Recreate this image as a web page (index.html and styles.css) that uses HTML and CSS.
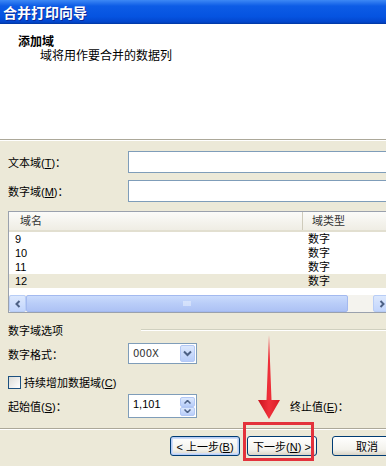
FILE: index.html
```html
<!DOCTYPE html>
<html lang="zh-CN">
<head>
    <meta charset="UTF-8">
    <title>合并打印向导</title>
    <link rel="stylesheet" href="styles.css">
</head>
<body>
    <div class="dialog">
        <div class="titlebar">合并打印向导</div>
        <div class="header">
            <div class="header-title">添加域</div>
            <div class="header-desc">域将用作要合并的数据列</div>
        </div>

        <div class="content">
            <div class="field-row">
                <label>文本域(<u>T</u>)：</label>
                <div class="textbox"></div>
            </div>
            <div class="field-row second">
                <label>数字域(<u>M</u>)：</label>
                <div class="textbox"></div>
            </div>

            <div class="listview">
                <div class="list-main">
                    <div class="list-head">
                        <div class="col-name">域名</div>
                        <div class="col-type">域类型</div>
                    </div>
                    <div class="list-row"><span class="col-name">9</span><span class="col-type">数字</span></div>
                    <div class="list-row"><span class="col-name">10</span><span class="col-type">数字</span></div>
                    <div class="list-row"><span class="col-name">11</span><span class="col-type">数字</span></div>
                    <div class="list-row selected"><span class="col-name">12</span><span class="col-type">数字</span></div>
                    <div class="list-fill"></div>
                    <div class="hscroll">
                        <div class="sb-btn">
                            <svg width="8" height="8" viewBox="0 0 8 8"><path d="M5.5 1 L2.5 4 L5.5 7" fill="none" stroke="#4d6185" stroke-width="2"/></svg>
                        </div>
                        <div class="sb-thumb h">
                            <svg width="8" height="7" viewBox="0 0 8 7"><path d="M1 1v5M3 1v5M5 1v5M7 1v5" stroke="#eef4fe" stroke-width="1"/></svg>
                        </div>
                        <div class="sb-track"></div>
                        <div class="sb-btn">
                            <svg width="8" height="8" viewBox="0 0 8 8"><path d="M2.5 1 L5.5 4 L2.5 7" fill="none" stroke="#4d6185" stroke-width="2"/></svg>
                        </div>
                    </div>
                </div>
                <div class="vscroll">
                    <div class="sb-btn"></div>
                    <div class="sb-track v"></div>
                    <div class="sb-thumb v"></div>
                    <div class="sb-btn"></div>
                </div>
            </div>

            <div class="group-title">
                <span>数字域选项</span>
                <div class="group-line"></div>
            </div>

            <div class="field-row format-row">
                <label>数字格式：</label>
                <div class="combo">
                    <span class="combo-text">000X</span>
                    <span class="combo-btn">
                        <svg width="9" height="7" viewBox="0 0 9 7"><path d="M1 1.5 L4.5 5 L8 1.5" fill="none" stroke="#4d6185" stroke-width="2"/></svg>
                    </span>
                </div>
            </div>

            <div class="check-row">
                <span class="checkbox"></span>
                <span>持续增加数据域(<u>C</u>)</span>
            </div>

            <div class="field-row spin-row">
                <label>起始值(<u>S</u>)：</label>
                <div class="spin">
                    <span class="spin-text">1,101</span>
                    <span class="spin-btns">
                        <span class="spin-btn">
                            <svg width="7" height="4" viewBox="0 0 7 4"><path d="M0.5 3.5 L3.5 0.5 L6.5 3.5" fill="none" stroke="#4d6185" stroke-width="1.5"/></svg>
                        </span>
                        <span class="spin-btn">
                            <svg width="7" height="4" viewBox="0 0 7 4"><path d="M0.5 0.5 L3.5 3.5 L6.5 0.5" fill="none" stroke="#4d6185" stroke-width="1.5"/></svg>
                        </span>
                    </span>
                </div>
                <label class="end-label">终止值(<u>E</u>)：</label>
            </div>
        </div>

        <div class="footer">
            <button class="btn default">&lt; 上一步(<u>B</u>)</button>
            <button class="btn">下一步(<u>N</u>) &gt;</button>
            <button class="btn cancel">取消</button>
        </div>

        <!-- 标注 -->
        <div class="highlight"></div>
        <svg class="arrow" width="26" height="90" viewBox="0 0 26 90">
            <defs>
                <linearGradient id="arrowFill" x1="0" x2="1" y1="0" y2="0">
                    <stop offset="0" stop-color="#c8141e"/>
                    <stop offset="0.5" stop-color="#f0303a"/>
                    <stop offset="1" stop-color="#d81c26"/>
                </linearGradient>
            </defs>
            <path d="M13 2 L15.5 67 L24 67 L13 86 L2 67 L10.5 67 Z" fill="url(#arrowFill)"/>
        </svg>
    </div>
</body>
</html>
```

FILE: styles.css
```css
html, body {
    margin: 0;
    padding: 0;
    overflow: hidden;
}
body {
    width: 386px;
    height: 466px;
    background-color: #ece9d8;
    font-family: "Liberation Sans", "Noto Sans CJK SC", sans-serif;
    font-size: 11px;
    color: #000;
}
u {
    text-decoration: underline;
}
.dialog {
    position: relative;
    width: 408px;
    height: 466px;
}
.titlebar {
    height: 24px;
    line-height: 24px;
    padding-left: 3px;
    color: #fff;
    font-family: "Noto Sans CJK SC", sans-serif;
    font-weight: bold;
    font-size: 14px;
    text-shadow: 1px 1px 0 #0a2a9a;
    background: linear-gradient(#3d88f5, #0d5ce6 25%, #0553e0 70%, #0346cc 92%, #00369e);
}
.header {
    box-sizing: border-box;
    height: 116px;
    padding: 10px 0 0 18px;
    background-color: #fff;
    border-bottom: 1px solid #aca899;
}
.header-title {
    font-family: "Noto Sans CJK SC", sans-serif;
    font-weight: bold;
    font-size: 12px;
    line-height: 14px;
}
.header-desc {
    font-family: "Noto Sans CJK SC", sans-serif;
    font-size: 12px;
    line-height: 14px;
    margin: 0 0 0 22px;
}
.content {
    border-top: 1px solid #fff;
    padding: 10px 0 0 8px;
}
.field-row {
    display: grid;
    grid-template-columns: 120px 1fr;
    align-items: center;
    height: 22px;
}
.field-row.second {
    margin-top: 7px;
}
.textbox {
    box-sizing: border-box;
    height: 22px;
    background: #fff;
    border: 1px solid #7f9db9;
}

/* 列表 */
.listview {
    display: flex;
    box-sizing: border-box;
    margin-top: 9px;
    height: 102px;
    background: #fff;
    border: 1px solid #9aa1ad;
}
.list-main {
    flex: 1;
    display: flex;
    flex-direction: column;
    font-size: 11px;
}
.list-head {
    display: flex;
    box-sizing: border-box;
    height: 20px;
    line-height: 19px;
    color: #333;
    background: linear-gradient(#fbfbf9, #efede4);
    border-bottom: 2px solid #e2dfd0;
}
.list-head .col-name {
    width: 282px;
    padding-left: 11px;
    border-right: 1px solid #cfcbbb;
}
.list-head .col-type {
    padding-left: 9px;
}
.list-row {
    display: flex;
    height: 14px;
    line-height: 14px;
}
.list-row.selected {
    background: #ece9d8;
}
.list-row .col-name {
    width: 293px;
    padding-left: 6px;
}
.list-fill {
    flex: 1;
}
.hscroll {
    display: flex;
    height: 17px;
    background: #f4f3ee;
}
.sb-btn {
    box-sizing: border-box;
    width: 17px;
    height: 17px;
    display: flex;
    align-items: center;
    justify-content: center;
    background: linear-gradient(#dce8fd, #c2d5fc);
    border: 1px solid #b8cdf6;
    border-radius: 2px;
}
.sb-thumb.h {
    width: 322px;
    display: flex;
    align-items: center;
    justify-content: center;
    box-sizing: border-box;
    background: linear-gradient(#cadbfc, #b9cdf8 50%, #adc2f4);
    border: 1px solid #a3b9ef;
    border-radius: 2px;
}
.sb-track {
    flex: 1;
}
.vscroll {
    width: 17px;
    display: flex;
    flex-direction: column;
    background: #f4f3ee;
}
.sb-track.v {
    flex: 1;
}
.sb-thumb.v {
    height: 28px;
    background: linear-gradient(90deg, #cadbfc, #adc2f4);
    border: 1px solid #a3b9ef;
    border-radius: 2px;
}

/* 数字域选项 */
.group-title {
    display: flex;
    align-items: center;
    margin-top: 9px;
    height: 16px;
    font-family: "Noto Sans CJK SC", sans-serif;
}
.group-line {
    flex: 1;
    margin-left: 78px;
    border-top: 1px solid #d0d0bf;
    border-bottom: 1px solid #fff;
}
.format-row {
    margin-top: 5px;
    height: 21px;
}
.combo {
    box-sizing: border-box;
    width: 69px;
    height: 21px;
    display: flex;
    align-items: center;
    justify-content: space-between;
    background: #fff;
    border: 1px solid #7f9db9;
    padding: 1px;
}
.combo-text {
    padding-left: 3px;
    font-family: "DejaVu Sans", sans-serif;
    font-size: 10px;
    color: #333;
}
.combo-btn {
    box-sizing: border-box;
    width: 15px;
    height: 17px;
    display: flex;
    align-items: center;
    justify-content: center;
    background: linear-gradient(#dce8fd, #b8cdf9);
    border: 1px solid #b3c8f5;
    border-radius: 2px;
}
.check-row {
    display: flex;
    align-items: center;
    margin-top: 11px;
    height: 14px;
}
.checkbox {
    box-sizing: border-box;
    width: 13px;
    height: 13px;
    margin-right: 3px;
    border: 1px solid #1c5180;
    background: linear-gradient(135deg, #dcdcd7, #fff);
}
.spin-row {
    grid-template-columns: 120px 69px 1fr;
    margin-top: 5px;
    height: 24px;
}
.spin {
    box-sizing: border-box;
    width: 69px;
    height: 24px;
    display: flex;
    justify-content: space-between;
    background: #fff;
    border: 1px solid #7f9db9;
    padding: 1px;
}
.spin-text {
    padding: 2px 0 0 3px;
    font-size: 11px;
}
.spin-btns {
    display: flex;
    flex-direction: column;
    width: 15px;
    margin-top: 1px;
}
.spin-btn {
    height: 10px;
    display: flex;
    align-items: center;
    justify-content: center;
    background: linear-gradient(#dce8fd, #b8cdf9);
    border: 1px solid #b3c8f5;
    border-radius: 2px;
    box-sizing: border-box;
}
.end-label {
    margin-left: 93px;
}

/* 底部按钮 */
.footer {
    display: flex;
    justify-content: flex-end;
    margin-top: 10px;
    padding: 7px 6px 0 0;
    border-top: 1px solid #aca899;
    box-shadow: inset 0 1px 0 #fff;
}
.btn {
    box-sizing: border-box;
    width: 70px;
    height: 20px;
    padding: 0;
    margin-left: 7px;
    font-family: "Liberation Sans", "Noto Sans CJK SC", sans-serif;
    font-size: 11px;
    color: #000;
    background: linear-gradient(#ffffff, #f3f2ec 70%, #d9d4c6);
    border: 1px solid #003c74;
    border-radius: 3px;
}
.btn.default {
    box-shadow: inset 0 0 0 1px #b7cdf6, inset 0 0 0 2px #cfdcf8;
}
.btn.cancel {
    margin-left: 15px;
}

/* 标注 */
.highlight {
    position: absolute;
    left: 243px;
    top: 422px;
    width: 71px;
    height: 39px;
    box-sizing: border-box;
    border: 3px solid #e3323c;
}
.arrow {
    position: absolute;
    left: 256px;
    top: 333px;
}
```
